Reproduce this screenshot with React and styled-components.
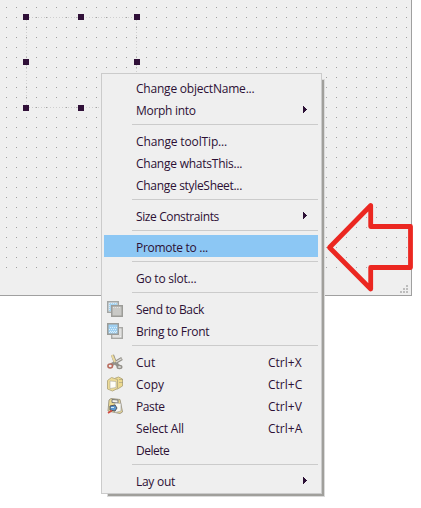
import React from 'react';
import styled, { createGlobalStyle, css } from 'styled-components';

const Global = createGlobalStyle`
  * { box-sizing: border-box; }
  body { margin: 0; background: #fff; overflow: hidden; }
`;

const Desktop = styled.main`
  position: relative;
  width: 421px;
  height: 508px;
  overflow: hidden;
  font: 12px/22px "Open Sans", "Noto Sans", sans-serif;
  color: #2c1035;
`;

const FormCanvas = styled.section`
  position: relative;
  width: 412px;
  height: 296px;
  background: #efefef;
  border: solid #a0a0a0;
  border-width: 0 1px 1px 0;
`;

const DotGrid = styled.div`
  height: 270px;
  background: conic-gradient(from 270deg at 1px 1px, #a0a0a0 90deg, transparent 0) 6px 7px / 10px 10px;
`;

const CanvasDrawing = styled.svg`
  position: absolute;
  left: 0;
  top: 0;
`;

const ContextMenu = styled.nav`
  position: absolute;
  left: 101px;
  top: 73px;
  width: 221px;
  height: 421px;
  padding: 2px 3px 2px 2px;
  background: #efefef;
  border: 1px solid #cbcbcb;
`;

const MenuShadow = styled.div`
  position: absolute;
  left: 108px;
  top: 80px;
  width: 216px;
  height: 416px;
  background: #a09f9b;
  box-shadow: 0 0 0 1px #dadada;
`;

const Item = styled.div`
  display: grid;
  grid-template-columns: 32px 1fr 50px;
  align-items: center;
  height: 22px;
  white-space: pre;
  ${p => p.$active && css`background: #8cc7f4;`}
`;

const IconSlot = styled.span`
  display: flex;
  padding-left: 3px;
`;

const Label = styled.span`
  padding-top: 2px;
  letter-spacing: ${p => p.$tracking || 0}px;
`;

const Shortcut = styled.span`
  padding-top: 2px;
`;

const ArrowSlot = styled.span`
  display: flex;
  padding-left: 35px;
`;

const Separator = styled.div`
  height: 1px;
  margin: 4px 0 4px 28px;
  background: #cbcbcb;
`;

const Pointer = styled.svg`
  position: absolute;
  left: 324px;
  top: 200px;
`;

const Submenu = () => (
  <ArrowSlot>
    <svg width="6" height="8" shapeRendering="crispEdges"><path d="M0 0h1v1h1v1h1v1h1v1h-1v1h-1v1h-1v1h-1z" fill="#2c1035" /></svg>
  </ArrowSlot>
);

const icons = {
  back: (
    <>
      <rect x=".75" y=".75" width="10.500" height="10.500" fill="#e4f1f8" stroke="#a3a6a5" strokeWidth="1.5" />
      <rect x="2" y="2" width="8" height="8" fill="#a6d3f1" />
      <path d="M2 2.500h8M2 4.500h8M2 6.500h8M2 8.500h8" stroke="#d8ecf8" strokeDasharray="1 1" />
      <rect x="4.750" y="4.750" width="10.500" height="10.500" fill="#c9c9c6" stroke="#9c9c98" strokeWidth="1.5" />
      <path d="M6 6.500h8" stroke="#e5e5e3" strokeDasharray="1 1" />
    </>
  ),
  front: (
    <>
      <rect x="4.750" y="4.750" width="10.500" height="10.500" fill="#f2f2f2" stroke="#a8a8a5" strokeWidth="1.5" />
      <path d="M13 6v7H6" fill="none" stroke="#d0d0ce" />
      <rect x=".75" y=".75" width="10.500" height="10.500" fill="#9fd0f2" stroke="#9c9c98" strokeWidth="1.5" />
      <path d="M2 6.500h8M3 8.500h7M2 9.500h8M3 4.500h7" stroke="#dceff9" strokeDasharray="1 1" />
    </>
  ),
  cut: (
    <>
      <path d="M5.500 1l3 8 4 4M15 4.500L4 11" fill="none" stroke="#94918a" strokeWidth="3.200" />
      <path d="M5 1l3 7" stroke="#ead99d" strokeWidth="2" />
      <path d="M14.500 4.800L9 8" stroke="#dddcd7" strokeWidth="1.2" />
      <ellipse cx="3.200" cy="12" rx="2.300" ry="1.900" fill="#efefef" stroke="#b96b5e" strokeWidth="1.5" />
      <ellipse cx="12.500" cy="13" rx="2.300" ry="1.500" fill="#efefef" stroke="#94918a" strokeWidth="1.4" />
    </>
  ),
  copy: (
    <>
      <path d="M7.500 2.500l4-1.500 4 2v7l-5 3-4-1z" fill="#ecd98f" stroke="#b9ad80" />
      <path d="M13 3v6M15 3v6" stroke="#948e79" strokeDasharray="1 2" />
      <path d="M.5 4.500l4-3 6 2v9l-5 2.500-5-2z" fill="#eddb96" stroke="#b9ae85" />
      <path d="M3 5l6 .5v6l-6 1z" fill="#fffef7" stroke="#a9a79e" strokeWidth=".6" />
    </>
  ),
  paste: (
    <>
      <path d="M2 2l2-1.500 9 1L15.500 14 13 15.500 1 13z" fill="#ecd991" stroke="#a19b88" />
      <path d="M5 1.500l6 .5v3l-6-.5z" fill="#f2f2ee" stroke="#777" />
      <path d="M8 5l6 .5V13l-6 1.500z" fill="#f8f8f1" stroke="#aaa" strokeWidth=".7" />
      <path d="M3 8l5-1 2 3-2 3-5-1z" fill="#5996ce" stroke="#55565f" />
      <path d="M4 9.500h3" stroke="#d7eaf8" />
      <path d="M1 15l4-2.500" stroke="#d34a40" strokeWidth="1.7" />
    </>
  ),
};

const entries = [
  { label: 'Change objectName...', tracking: -0.21 },
  { label: 'Morph into', submenu: true, tracking: -0.3 },
  null,
  { label: 'Change toolTip...', tracking: -0.14 },
  { label: 'Change whatsThis...', tracking: -0.24 },
  { label: 'Change styleSheet...', tracking: -0.31 },
  null,
  { label: 'Size Constraints', submenu: true, tracking: -0.39 },
  null,
  { label: 'Promote to ...', active: true, tracking: -0.28 },
  null,
  { label: 'Go to slot...', tracking: -0.23 },
  null,
  { label: 'Send to Back', icon: 'back', tracking: -0.35 },
  { label: 'Bring to Front', icon: 'front', tracking: -0.28 },
  null,
  { label: 'Cut', icon: 'cut', shortcut: 'Ctrl+X' },
  { label: 'Copy', icon: 'copy', shortcut: 'Ctrl+C' },
  { label: 'Paste', icon: 'paste', shortcut: 'Ctrl+V', tracking: -0.4 },
  { label: 'Select All', shortcut: 'Ctrl+A', tracking: -0.2 },
  { label: 'Delete', tracking: -0.5 },
  null,
  { label: 'Lay out', submenu: true, tracking: -0.28 },
];

const handles = [[23, 14], [78, 14], [134, 14], [23, 59], [134, 59], [23, 105], [78, 105]];
const gripDots = [[407, 285], [404, 288], [407, 288], [401, 291], [404, 291], [407, 291]];

export default function App() {
  return (
    <Desktop>
      <Global />
      <FormCanvas>
        <DotGrid />
        <CanvasDrawing width="411" height="295" shapeRendering="crispEdges">
          <path d="M26.500 17V107M136.500 17V107M26 17.500H136M26 107.500H136" stroke="#cfcfcf" strokeDasharray="1 2" />
          {handles.map(([x, y]) => <rect key={`${x}-${y}`} x={x} y={y} width="6" height="6" fill="#301038" />)}
          {gripDots.map(([x, y]) => <rect key={`${x}-${y}`} x={x - 1} y={y} width="2" height="2" fill="#bdbdbd" />)}
        </CanvasDrawing>
      </FormCanvas>
      <MenuShadow />
      <ContextMenu>
        {entries.map((e, i) => e ? (
          <Item key={e.label} $active={e.active}>
            <IconSlot>{e.icon && <svg width="16" height="16">{icons[e.icon]}</svg>}</IconSlot>
            <Label $tracking={e.tracking}>{e.label}</Label>
            {e.submenu ? <Submenu /> : <Shortcut>{e.shortcut}</Shortcut>}
          </Item>
        ) : <Separator key={i} />)}
      </ContextMenu>
      <Pointer width="97" height="104">
        <path d="M5.500 47.500L46.700 5.500V26.500H86.500V67.500H46.700V89z" fill="none" stroke="#eb2721" strokeWidth="4.800" strokeLinejoin="round" />
      </Pointer>
    </Desktop>
  );
}
